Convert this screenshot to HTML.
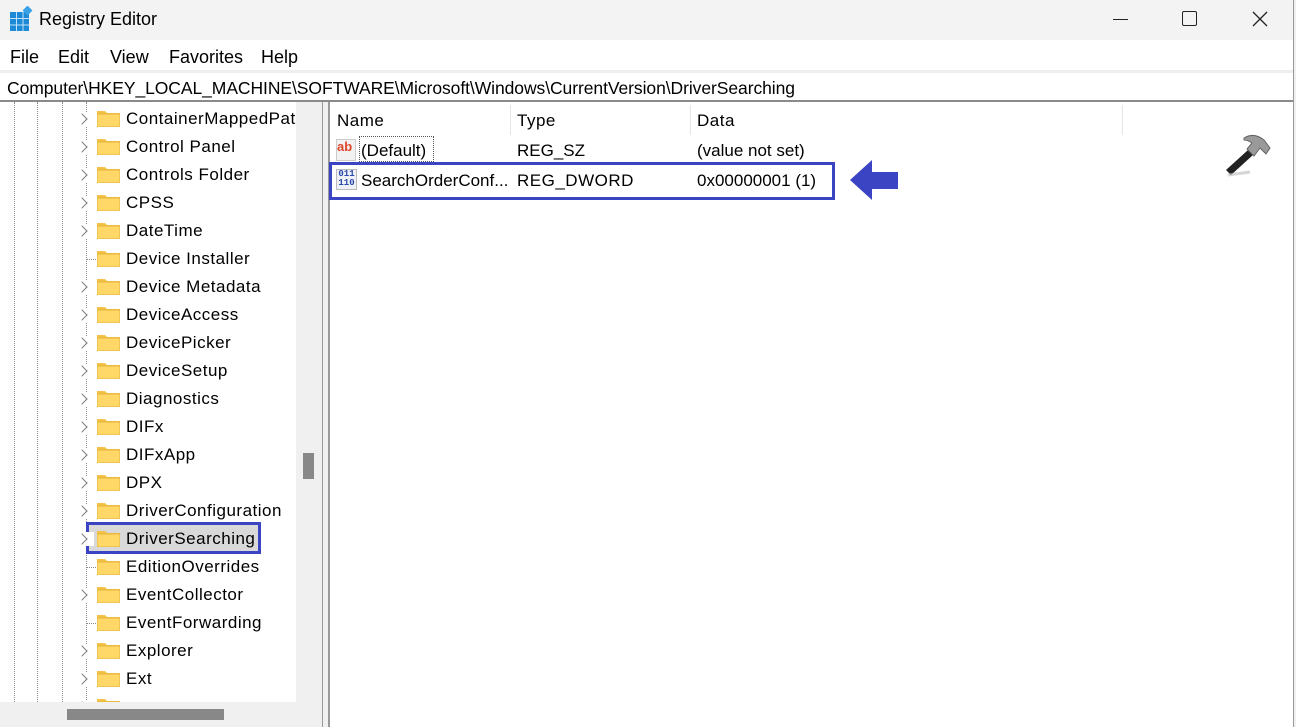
<!DOCTYPE html>
<html><head><meta charset="utf-8"><style>
*{margin:0;padding:0;box-sizing:border-box}
body{width:1296px;height:727px;overflow:hidden;background:#fff;font-family:"Liberation Sans",sans-serif;color:#000;position:relative}
.a{position:absolute}
.t{font-size:17px;white-space:nowrap}
.tr{letter-spacing:0.5px}
.fold{position:absolute;width:23px;height:17px}
.chev{position:absolute;width:8px;height:8px;border-right:1.5px solid #777;border-bottom:1.5px solid #777;transform:rotate(-45deg)}
.vd{position:absolute;width:0;border-left:1px dotted #888}
.hd{position:absolute;height:0;border-top:1px dotted #888}
</style></head><body>
<div class="a" style="left:0;top:0;width:1296px;height:40px;background:#f3f3f3"></div>
<svg class="a" style="left:9px;top:6px" width="24" height="26" viewBox="0 0 24 26">
<rect x="1" y="6" width="19" height="19" fill="#1e8ad6"/>
<g stroke="#bfe3fb" stroke-width="1"><line x1="7.5" y1="6" x2="7.5" y2="25"/><line x1="14" y1="6" x2="14" y2="25"/><line x1="1" y1="12.5" x2="20" y2="12.5"/><line x1="1" y1="19" x2="20" y2="19"/></g>
<rect x="15" y="1" width="7" height="7" fill="#3aa0e8" transform="rotate(45 18.5 4.5)"/></svg>
<div class="a t" style="left:39px;top:9px;font-size:18px">Registry Editor</div>
<div class="a" style="left:1113px;top:19px;width:15px;height:1px;background:#222"></div>
<div class="a" style="left:1182px;top:11px;width:15px;height:15px;border:1.3px solid #222;border-radius:2px"></div>
<svg class="a" style="left:1252px;top:11px" width="16" height="16"><path d="M1 1L15 15M15 1L1 15" stroke="#222" stroke-width="1.3"/></svg>
<div class="a" style="left:0;top:41px;width:1293px;height:30px;background:#fff"></div>
<div class="a t" style="left:10px;top:47px;font-size:18px">File</div>
<div class="a t" style="left:58px;top:47px;font-size:18px">Edit</div>
<div class="a t" style="left:110px;top:47px;font-size:18px">View</div>
<div class="a t" style="left:169px;top:47px;font-size:18px">Favorites</div>
<div class="a t" style="left:261px;top:47px;font-size:18px">Help</div>
<div class="a" style="left:0;top:70px;width:1293px;height:3px;background:#eee"></div>
<div class="a t" style="left:7px;top:78px;font-size:17.5px;letter-spacing:-0.07px">Computer\HKEY_LOCAL_MACHINE\SOFTWARE\Microsoft\Windows\CurrentVersion\DriverSearching</div>
<div class="a" style="left:0;top:100px;width:1293px;height:2px;background:#8a8a8a"></div>
<div class="a" style="left:1293px;top:0;width:3px;height:727px;background:#f0f0f0;border-left:1px solid #999"></div>
<div class="vd" style="left:14px;top:102px;height:600px"></div>
<div class="vd" style="left:37px;top:102px;height:600px"></div>
<div class="vd" style="left:62px;top:102px;height:600px"></div>
<div class="vd" style="left:86px;top:102px;height:600px"></div>
<div class="a" style="left:86px;top:522px;width:175px;height:32px;border:3px solid #3b45c4;background:#d9d9d9"></div>
<div id="tree"></div>
<div class="a" style="left:296px;top:102px;width:26px;height:625px;background:#f0f0f0"></div>
<div class="a" style="left:303px;top:453px;width:11px;height:26px;background:#888"></div>
<div class="a" style="left:322px;top:102px;width:1px;height:625px;background:#999"></div>
<div class="a" style="left:323px;top:102px;width:5px;height:625px;background:#f0f0f0"></div>
<div class="a" style="left:328px;top:102px;width:2px;height:625px;background:#999"></div>
<div class="a" style="left:510px;top:105px;width:1px;height:30px;background:#e5e5e5"></div>
<div class="a" style="left:690px;top:105px;width:1px;height:30px;background:#e5e5e5"></div>
<div class="a" style="left:1122px;top:105px;width:1px;height:30px;background:#e5e5e5"></div>
<div class="a t tr" style="left:337px;top:111px">Name</div>
<div class="a t tr" style="left:517px;top:111px">Type</div>
<div class="a t tr" style="left:697px;top:111px">Data</div>
<div class="a" style="left:336px;top:139px;width:20px;height:22px;background:#f2f2f2;border:1px solid #ccc"></div>
<div class="a" style="left:337px;top:139px;font-size:13px;font-weight:bold;color:#e0462a">ab</div>
<div class="a" style="left:359px;top:136px;width:75px;height:26px;border:1px dotted #555"></div>
<div class="a t" style="left:361px;top:141px">(Default)</div>
<div class="a t" style="left:517px;top:141px">REG_SZ</div>
<div class="a t" style="left:697px;top:141px">(value not set)</div>
<div class="a" style="left:329px;top:162px;width:506px;height:38px;border:3px solid #3b45c4"></div>
<div class="a" style="left:336px;top:169px;width:21px;height:21px;background:#eef0fa;border:1px solid #bbb;font-size:9px;font-weight:bold;color:#2a4aa8;line-height:9px;text-align:center;font-family:'Liberation Mono',monospace">011<br>110</div>
<div class="a t" style="left:361px;top:171px">SearchOrderConf...</div>
<div class="a t tr" style="left:517px;top:171px">REG_DWORD</div>
<div class="a t" style="left:697px;top:171px">0x00000001 (1)</div>
<svg class="a" style="left:848px;top:159px" width="52" height="42"><path d="M2 21L24 1V13H50V30H24V41Z" fill="#3b45c4"/></svg>
<svg class="a" style="left:1220px;top:130px" width="56" height="50" viewBox="0 0 56 50">
<path d="M6 40L28 20L33 25L11 45Z" fill="#222"/>
<path d="M8 45L30 42" stroke="#bbb" stroke-width="3" opacity=".6"/>
<path d="M24 8Q34 2 44 10L50 18L46 24L40 18L34 26L27 19L32 13Q28 10 24 10Z" fill="#9a9a9a" stroke="#666" stroke-width="1"/></svg>
<script>
var items=[["ContainerMappedPatl",1],["Control Panel",1],["Controls Folder",1],["CPSS",1],["DateTime",1],["Device Installer",0],["Device Metadata",1],["DeviceAccess",1],["DevicePicker",1],["DeviceSetup",1],["Diagnostics",1],["DIFx",1],["DIFxApp",1],["DPX",1],["DriverConfiguration",1],["DriverSearching",1],["EditionOverrides",0],["EventCollector",1],["EventForwarding",0],["Explorer",1],["Ext",1],["F",1]];
var h="";
items.forEach(function(it,i){var c=119+28*i;
if(it[1])h+='<div class="a" style="left:80px;top:'+(c-7)+'px;width:14px;height:14px;background:#fff"></div><div class="chev" style="left:78px;top:'+(c-4)+'px"></div>';
else h+='<div class="hd" style="left:86px;top:'+c+'px;width:10px"></div>';
h+='<svg class="fold" style="left:97px;top:'+(c-9)+'px" viewBox="0 0 23 17"><path d="M0 1h8l2 2h13v14H0z" fill="#f2c347"/><rect x="0" y="4" width="23" height="13" fill="#ffd868"/><rect x="0" y="4" width="23" height="13" fill="none" stroke="#e0ad30" stroke-width=".8"/></svg>';
if(i<21)h+='<div class="a t tr" style="left:126px;top:'+(c-10)+'px;width:170px;overflow:hidden">'+it[0]+'</div>';});
document.getElementById("tree").innerHTML=h;
</script>
<div class="a" style="left:0;top:702px;width:296px;height:25px;background:#f0f0f0"></div>
<div class="a" style="left:67px;top:709px;width:157px;height:11px;background:#888"></div>
</body></html>
